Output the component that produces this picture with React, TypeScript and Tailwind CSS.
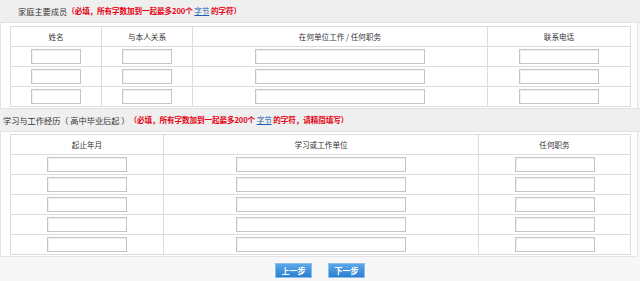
import React from "react";

const font = { fontFamily: '"Noto Sans CJK SC", "Noto Sans", sans-serif' };

const Input = ({ w }: { w: string }) => (
  <input
    type="text"
    className={`${w} h-[15px] border border-[#c4c4c4] bg-white shadow-[inset_1px_1px_1px_rgba(0,0,0,0.06)] outline-none`}
  />
);

const Hint = ({ extra }: { extra?: string }) => (
  <span className="text-[7.6px] font-bold tracking-[-0.1px] text-[#e60012]">
    （必填，所有字数加到一起最多200个{" "}
    <a className="font-normal text-[#1a5fb4] underline">字节</a> 的字符{extra}）
  </span>
);

export default function App() {
  const famRows = [0, 1, 2];
  const eduRows = [0, 1, 2, 3, 4];
  const th = "h-[20px] border border-[#dcdcdc] text-center font-normal text-[#333]";
  const td = "h-[20px] border border-[#dcdcdc] text-center align-middle";

  return (
    <div
      className="flex h-[281px] w-[640px] flex-col overflow-hidden bg-[#f7f7f7] text-[7.6px] leading-none text-[#333]"
      style={font}
    >
      {/* 家庭主要成员 */}
      <div className="flex h-[23px] shrink-0 items-center border-b border-[#e2e2e2] bg-[#efefef] pl-[18px]">
        <span className="text-[8.2px]">家庭主要成员</span>
        <Hint />
      </div>
      <div className="mr-[2px] shrink-0 border-x border-[#e4e4e4] bg-white pb-[1px] pl-[9px] pr-[8px] pt-[3px]">
        <table className="w-[620px] table-fixed border-collapse">
          <colgroup>
            <col className="w-[91px]" />
            <col className="w-[91px]" />
            <col className="w-[295px]" />
            <col className="w-[143px]" />
          </colgroup>
          <thead>
            <tr>
              <th className={th}>姓名</th>
              <th className={th}>与本人关系</th>
              <th className={th}>在何单位工作 / 任何职务</th>
              <th className={th}>联系电话</th>
            </tr>
          </thead>
          <tbody>
            {famRows.map((r) => (
              <tr key={r}>
                <td className={td}>
                  <div className="flex justify-center"><Input w="w-[50px]" /></div>
                </td>
                <td className={td}>
                  <div className="flex justify-center"><Input w="w-[50px]" /></div>
                </td>
                <td className={td}>
                  <div className="flex justify-center"><Input w="w-[170px]" /></div>
                </td>
                <td className={td}>
                  <div className="flex justify-center"><Input w="w-[80px]" /></div>
                </td>
              </tr>
            ))}
          </tbody>
        </table>
      </div>

      {/* 学习与工作经历 */}
      <div className="flex h-[24px] shrink-0 items-center border-y border-[#e2e2e2] bg-[#efefef] pl-[3px]">
        <span className="text-[8.2px]">学习与工作经历（ 高中毕业后起 ）</span>
        <Hint extra="，请精简填写" />
      </div>
      <div className="mr-[2px] shrink-0 border-x border-b border-[#e4e4e4] bg-white pb-[1px] pl-[9px] pr-[8px] pt-[2px]">
        <table className="w-[620px] table-fixed border-collapse">
          <colgroup>
            <col className="w-[153px]" />
            <col className="w-[315px]" />
            <col className="w-[152px]" />
          </colgroup>
          <thead>
            <tr>
              <th className={th}>起止年月</th>
              <th className={th}>学习或工作单位</th>
              <th className={th}>任何职务</th>
            </tr>
          </thead>
          <tbody>
            {eduRows.map((r) => (
              <tr key={r}>
                <td className={td}>
                  <div className="flex justify-center"><Input w="w-[80px]" /></div>
                </td>
                <td className={td}>
                  <div className="flex justify-center"><Input w="w-[170px]" /></div>
                </td>
                <td className={td}>
                  <div className="flex justify-center"><Input w="w-[80px]" /></div>
                </td>
              </tr>
            ))}
          </tbody>
        </table>
      </div>

      {/* buttons */}
      <div className="flex justify-center gap-[16px] pt-[6px]">
        <button className="h-[15px] w-[37px] border border-[#8cc0ea] bg-gradient-to-b from-[#5aa8ea] to-[#2a7fcf] text-[8px] font-bold leading-none text-white">
          上一步
        </button>
        <button className="h-[15px] w-[37px] border border-[#8cc0ea] bg-gradient-to-b from-[#5aa8ea] to-[#2a7fcf] text-[8px] font-bold leading-none text-white">
          下一步
        </button>
      </div>
    </div>
  );
}
